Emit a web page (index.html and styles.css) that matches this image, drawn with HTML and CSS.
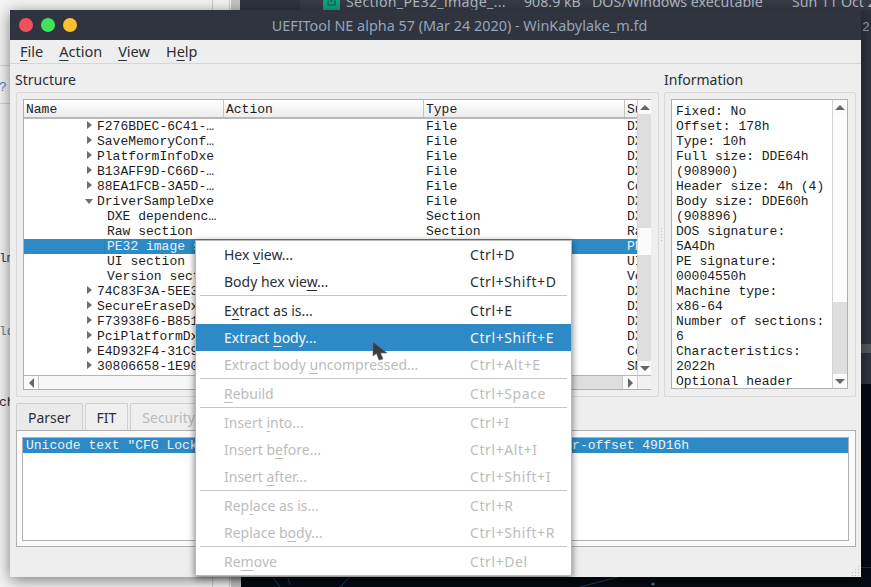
FILE: index.html
```html
<!DOCTYPE html>
<html lang="en">
<head>
  <meta charset="UTF-8">
  <meta name="viewport" content="width=device-width, initial-scale=1.0">
  <title>UEFITool NE alpha 57</title>
  <link rel="stylesheet" href="styles.css">
</head>
<body>
  <div class="desktop">
    <!-- things behind the window -->
    <div class="files-left">
      <span class="frag frag-a">?</span>
      <span class="frag frag-b">lm</span>
      <span class="frag frag-c">ld</span>
      <span class="frag frag-d">ch</span>
    </div>
    <div class="files-right">
      <div class="file-row">
        <svg class="file-icon" width="17" height="14" viewBox="0 0 17 14"><rect width="17" height="14" fill="#12a37f"/><rect x="5" y="1" width="7" height="8" fill="none" stroke="#0b5f4c"/><path d="M7.5 3.5 L10 5 L7.5 6.500Z" fill="#0b5f4c"/></svg>
        <span class="file-name">Section_PE32_image_...</span>
        <span class="file-size">908.9 kB</span>
        <span class="file-type">DOS/Windows executable</span>
        <span class="file-date">Sun 11 Oct 2020</span>
      </div>
    </div>
    <span class="frag frag-e">2</span>
    <div class="strip-band"></div>
    <svg class="wallpaper" width="631" height="20" viewBox="0 0 631 20">
      <path d="M25 0 L40 20 M45 0 L50 18 M100 20 L120 0 M400 4 L340 20 M400 4 L640 0" stroke="#1c4560" stroke-width="1" fill="none"/>
      <circle cx="413" cy="17" r="1.500" fill="#3d87a8"/>
    </svg>

    <div class="window">
      <div class="titlebar">
        <div class="lights">
          <span class="light red"></span>
          <span class="light green"></span>
          <span class="light yellow"></span>
        </div>
        <div class="title">UEFITool NE alpha 57 (Mar 24 2020) - WinKabylake_m.fd</div>
      </div>

      <div class="menubar">
        <span><u>F</u>ile</span>
        <span><u>A</u>ction</span>
        <span><u>V</u>iew</span>
        <span>H<u>e</u>lp</span>
      </div>

      <div class="content">
        <div class="panels">
          <section class="panel">
            <h2 class="panel-title structure-title">Structure</h2>
            <div class="group">
              <div class="tree">
                <div class="tree-main">
                  <div class="tree-head">
                    <div class="head-cell c-name">Name</div>
                    <div class="head-cell c-action">Action</div>
                    <div class="head-cell c-type">Type</div>
                    <div class="head-cell c-sub">Subtype</div>
                  </div>
                  <div class="row"><div class="c-name node"><i class="arrow-r"></i>F276BDEC-6C41-…</div><div class="c-action"></div><div class="c-type">File</div><div class="c-sub">DXE driver</div></div>
                  <div class="row"><div class="c-name node"><i class="arrow-r"></i>SaveMemoryConf…</div><div class="c-action"></div><div class="c-type">File</div><div class="c-sub">DXE driver</div></div>
                  <div class="row"><div class="c-name node"><i class="arrow-r"></i>PlatformInfoDxe</div><div class="c-action"></div><div class="c-type">File</div><div class="c-sub">DXE driver</div></div>
                  <div class="row"><div class="c-name node"><i class="arrow-r"></i>B13AFF9D-C66D-…</div><div class="c-action"></div><div class="c-type">File</div><div class="c-sub">DXE driver</div></div>
                  <div class="row"><div class="c-name node"><i class="arrow-r"></i>88EA1FCB-3A5D-…</div><div class="c-action"></div><div class="c-type">File</div><div class="c-sub">Combined</div></div>
                  <div class="row"><div class="c-name node"><i class="arrow-d"></i>DriverSampleDxe</div><div class="c-action"></div><div class="c-type">File</div><div class="c-sub">DXE driver</div></div>
                  <div class="row"><div class="c-name leaf">DXE dependenc…</div><div class="c-action"></div><div class="c-type">Section</div><div class="c-sub">DXE dep</div></div>
                  <div class="row"><div class="c-name leaf">Raw section</div><div class="c-action"></div><div class="c-type">Section</div><div class="c-sub">Raw</div></div>
                  <div class="row selected"><div class="c-name leaf"><span class="focus">PE32 image section</span></div><div class="c-action"></div><div class="c-type">Section</div><div class="c-sub">PE32</div></div>
                  <div class="row"><div class="c-name leaf">UI section</div><div class="c-action"></div><div class="c-type">Section</div><div class="c-sub">UI</div></div>
                  <div class="row"><div class="c-name leaf">Version section</div><div class="c-action"></div><div class="c-type">Section</div><div class="c-sub">Version</div></div>
                  <div class="row"><div class="c-name node"><i class="arrow-r"></i>74C83F3A-5EE3-…</div><div class="c-action"></div><div class="c-type">File</div><div class="c-sub">DXE driver</div></div>
                  <div class="row"><div class="c-name node"><i class="arrow-r"></i>SecureEraseDxe</div><div class="c-action"></div><div class="c-type">File</div><div class="c-sub">DXE driver</div></div>
                  <div class="row"><div class="c-name node"><i class="arrow-r"></i>F73938F6-B851-…</div><div class="c-action"></div><div class="c-type">File</div><div class="c-sub">DXE driver</div></div>
                  <div class="row"><div class="c-name node"><i class="arrow-r"></i>PciPlatformDxe</div><div class="c-action"></div><div class="c-type">File</div><div class="c-sub">DXE driver</div></div>
                  <div class="row"><div class="c-name node"><i class="arrow-r"></i>E4D932F4-31C9-…</div><div class="c-action"></div><div class="c-type">File</div><div class="c-sub">Combined</div></div>
                  <div class="row"><div class="c-name node"><i class="arrow-r"></i>30806658-1E90-…</div><div class="c-action"></div><div class="c-type">File</div><div class="c-sub">SMM driver</div></div>
                </div>
                <div class="vbar">
                  <div class="sb-btn"><i class="tri-up"></i></div>
                  <div class="vbar-track">
                    <div class="vbar-thumb"></div>
                  </div>
                  <div class="sb-btn"><i class="tri-down"></i></div>
                </div>
                <div class="hbar">
                  <div class="sb-btn"><i class="tri-left"></i></div>
                  <div class="hbar-track">
                    <div class="hbar-thumb"></div>
                  </div>
                  <div class="sb-btn"><i class="tri-right"></i></div>
                </div>
                <div class="corner"></div>
              </div>
            </div>
          </section>

          <section class="panel">
            <h2 class="panel-title">Information</h2>
            <div class="group">
              <div class="info">
                <div class="info-text">Fixed: No
Offset: 178h
Type: 10h
Full size: DDE64h
(908900)
Header size: 4h (4)
Body size: DDE60h
(908896)
DOS signature:
5A4Dh
PE signature:
00004550h
Machine type:
x86-64
Number of sections:
6
Characteristics:
2022h
Optional header</div>
                <div class="vbar">
                  <div class="sb-btn"><i class="tri-up"></i></div>
                  <div class="vbar-track info-track">
                    <div class="info-thumb"></div>
                  </div>
                  <div class="sb-btn"><i class="tri-down"></i></div>
                </div>
              </div>
            </div>
          </section>
        </div>

        <div class="tabs">
          <div class="tab tab-active">Parser</div>
          <div class="tab">FIT</div>
          <div class="tab tab-disabled">Security</div>
        </div>
        <div class="tab-pane">
          <div class="messages">
            <div class="message">Unicode text "CFG Lock" in DriverSampleDxe/PE32 image section at header-offset 49D16h</div>
          </div>
        </div>
      </div>

      <svg class="grip" width="11" height="11" viewBox="0 0 11 11" fill="#bdbdbd">
        <rect x="8" y="0" width="1" height="1"/><rect x="8" y="3" width="1" height="1"/><rect x="5" y="3" width="1" height="1"/><rect x="8" y="6" width="1" height="1"/><rect x="5" y="6" width="1" height="1"/><rect x="2" y="6" width="1" height="1"/><rect x="8" y="9" width="1" height="1"/><rect x="5" y="9" width="1" height="1"/><rect x="2" y="9" width="1" height="1"/>
      </svg>
      <div class="splitter"></div>
    </div>

    <div class="context-menu">
      <div class="item"><span class="label">Hex <u>v</u>iew...</span><span>Ctrl+D</span></div>
      <div class="item"><span class="label">Body hex vie<u>w</u>...</span><span>Ctrl+Shift+D</span></div>
      <div class="sep"></div>
      <div class="item"><span class="label">E<u>x</u>tract as is...</span><span>Ctrl+E</span></div>
      <div class="item active"><span class="label">Extract <u>b</u>ody...</span><span>Ctrl+Shift+E</span></div>
      <div class="item disabled"><span class="label">Extract body <u>u</u>ncompressed...</span><span>Ctrl+Alt+E</span></div>
      <div class="sep"></div>
      <div class="item disabled"><span class="label"><u>R</u>ebuild</span><span>Ctrl+Space</span></div>
      <div class="sep"></div>
      <div class="item disabled"><span class="label">Insert <u>i</u>nto...</span><span>Ctrl+I</span></div>
      <div class="item disabled"><span class="label">Insert b<u>e</u>fore...</span><span>Ctrl+Alt+I</span></div>
      <div class="item disabled"><span class="label">Insert <u>a</u>fter...</span><span>Ctrl+Shift+I</span></div>
      <div class="sep"></div>
      <div class="item disabled"><span class="label">Rep<u>l</u>ace as is...</span><span>Ctrl+R</span></div>
      <div class="item disabled"><span class="label">Replace b<u>o</u>dy...</span><span>Ctrl+Shift+R</span></div>
      <div class="sep"></div>
      <div class="item disabled"><span class="label">Re<u>m</u>ove</span><span>Ctrl+Del</span></div>
    </div>

    <svg class="cursor" width="18" height="21" viewBox="0 0 18 21">
      <path d="M1 1 L1 15 L4.500 12.500 L7 19 L11 18 L8.500 12 L15 12 Z" fill="#3c3c3e" stroke="#6a6a6a" stroke-width="0.600"/>
    </svg>
  </div>
</body>
</html>
```

FILE: styles.css
```css
* {
  box-sizing: border-box;
}

body {
  margin: 0;
  font-family: 'Noto Sans', sans-serif;
  font-size: 14px;
  color: #2b2f36;
}

.desktop {
  position: relative;
  width: 871px;
  height: 587px;
  overflow: hidden;
  background-color: #050b14;
}

/* background windows */
.files-left {
  position: absolute;
  left: 0;
  top: 0;
  width: 241px;
  height: 587px;
  background-color: #f4f4f4;
  background-image:
    linear-gradient(#d4d4d4, #d4d4d4),
    linear-gradient(#d4d4d4, #d4d4d4),
    linear-gradient(#cfcfcf, #cfcfcf),
    linear-gradient(#cfcfcf, #cfcfcf);
  background-repeat: no-repeat;
  background-size: 10px 1px, 10px 1px, 1px 100%, 1px 100%;
  background-position: 0 65px, 0 103px, 212px 0, 229px 0;
  border-right: 10px solid #c6c6c6;
}

.files-right {
  position: absolute;
  left: 240px;
  top: 0;
  width: 631px;
  height: 384px;
  background-color: #2f343f;
}

.file-row {
  position: relative;
  height: 10px;
  margin-left: 60px;
  overflow: hidden;
  background-color: #363b46;
  color: #b4bac4;
  font-size: 14.2px;
  line-height: 14px;
  white-space: nowrap;
}

.file-row span,
.file-icon {
  position: absolute;
  top: -5px;
}

.file-icon { left: 23px; top: -4px; }
.file-name { left: 46px; letter-spacing: 0.3px; }
.file-size { left: 224px; }
.file-type { left: 292px; }
.file-date { left: 492px; }

.frag {
  position: absolute;
  font-family: 'Liberation Mono', monospace;
  font-size: 13px;
  line-height: 15px;
}

.frag-a { left: -1px; top: 80px; color: #4b82b5; }
.frag-b { left: -1px; top: 251px; color: #27425c; }
.frag-c { left: -1px; top: 324px; color: #6e8193; }
.frag-d { left: -1px; top: 395px; color: #22303c; }
.frag-e { left: 862px; top: 20px; color: #9aa3ad; }

.strip-band {
  position: absolute;
  left: 861px;
  top: 344px;
  width: 10px;
  height: 9px;
  background-color: #555a61;
}

.wallpaper {
  position: absolute;
  left: 240px;
  top: 567px;
}

/* main window */
.window {
  position: absolute;
  left: 10px;
  top: 10px;
  width: 851px;
  height: 567px;
  background-color: #eeeeee;
  box-shadow: 0 3px 14px rgba(0, 0, 0, 0.5);
}

.titlebar {
  position: relative;
  display: flex;
  align-items: center;
  justify-content: center;
  height: 30px;
  background-color: #2f343f;
}

.lights {
  position: absolute;
  left: 9px;
  top: 8px;
  display: flex;
  gap: 8px;
}

.light {
  width: 14px;
  height: 14px;
  border-radius: 50%;
}

.red { background-color: #f0525b; }
.green { background-color: #3fe45c; }
.yellow { background-color: #fbc02f; }

.title {
  margin-left: 48px;
  color: #96a5bb;
  font-size: 14.4px;
}

.menubar {
  display: flex;
  gap: 16px;
  height: 24px;
  padding-left: 10px;
  border-bottom: 1px solid #d6d6d6;
  font-size: 14.5px;
  line-height: 23px;
}

u {
  text-decoration-thickness: 1px;
  text-decoration-skip-ink: none;
  text-underline-offset: 3px;
}

.content {
  padding: 0 5px 0 6px;
}

.panels {
  display: grid;
  grid-template-columns: 643px 192px;
  gap: 5px;
}

.panel-title {
  height: 28px;
  margin: 0;
  padding-top: 6px;
  font-size: 14px;
  font-weight: normal;
  line-height: 19px;
}

.structure-title {
  margin-left: -1px;
}

.group {
  height: 305px;
  padding: 6px 7px 7px 6px;
  border: 1px solid #d9d9d9;
  border-radius: 2px;
}

/* tree */
.tree {
  display: grid;
  grid-template-columns: 613px 14px;
  grid-template-rows: 275px 14px;
  height: 291px;
  border: 1px solid #b0b0b0;
  background-color: #fff;
  font-family: 'Liberation Mono', monospace;
  font-size: 13px;
  color: #1c1c1c;
}

.tree-main {
  overflow: hidden;
}

.tree-head {
  display: flex;
  height: 19px;
  border-bottom: 2px solid #b9b9b9;
  background: linear-gradient(#ffffff, #ececec);
  line-height: 19px;
}

.head-cell {
  padding-left: 2px;
  border-right: 1px solid #c4c4c4;
}

.row {
  display: flex;
  height: 15px;
  line-height: 15px;
  white-space: nowrap;
}

.c-name { width: 200px; }
.c-action { width: 200px; }
.c-type { width: 201px; padding-left: 2px; }
.c-sub { width: 12px; padding-left: 2px; overflow: hidden; }

.head-cell.c-sub { border-right: 0; }

.node,
.leaf {
  overflow: hidden;
}

.node { padding-left: 62px; }
.leaf { padding-left: 83px; }

.arrow-r,
.arrow-d {
  display: inline-block;
  width: 11px;
  vertical-align: 1px;
}

.arrow-r::before,
.arrow-d::before {
  content: "";
  display: block;
  width: 0;
  height: 0;
}

.arrow-r::before {
  margin-left: 1px;
  border-top: 4px solid transparent;
  border-bottom: 4px solid transparent;
  border-left: 5px solid #6b6e73;
}

.arrow-d::before {
  margin-left: -1px;
  border-left: 4px solid transparent;
  border-right: 4px solid transparent;
  border-top: 5px solid #6b6e73;
}

.selected {
  background-color: #2e8ac6;
  color: #e8f2f9;
}

.focus {
  margin-left: -2px;
  padding-left: 2px;
  outline: 1px solid #2a7fb8;
}

/* scrollbars */
.vbar {
  display: flex;
  flex-direction: column;
  grid-row: 1;
  grid-column: 2;
  border-left: 1px solid #d2d2d2;
}

.hbar {
  display: flex;
  grid-row: 2;
  grid-column: 1;
  border-top: 1px solid #b5b5b5;
}

.sb-btn {
  display: flex;
  align-items: center;
  justify-content: center;
  flex: 0 0 14px;
  background-color: #fafafa;
}

.vbar-track,
.hbar-track {
  flex: 1;
  background-color: #dedede;
}

.vbar-thumb {
  height: 27px;
  margin-top: 114px;
  background-color: #fbfbfb;
}

.hbar-track {
  border-left: 1px solid #c8c8c8;
  border-right: 1px solid #c8c8c8;
}

.hbar-thumb {
  width: 360px;
  height: 100%;
  background-color: #f7f7f7;
}

.corner {
  border-top: 1px solid #b5b5b5;
  border-left: 1px solid #d2d2d2;
  background-color: #f1f1f1;
}

.tri-up,
.tri-down {
  width: 0;
  height: 0;
  border-left: 5px solid transparent;
  border-right: 5px solid transparent;
}

.tri-up { border-bottom: 5px solid #666; }
.tri-down { border-top: 5px solid #666; }

.tri-left,
.tri-right {
  width: 0;
  height: 0;
  border-top: 5px solid transparent;
  border-bottom: 5px solid transparent;
}

.tri-left { border-right: 5px solid #666; }
.tri-right { border-left: 5px solid #666; }

/* information */
.info {
  display: flex;
  height: 290px;
  border: 1px solid #b0b0b0;
  background-color: #fff;
}

.info-text {
  flex: 1;
  padding: 4px 0 0 4px;
  overflow: hidden;
  font-family: 'Liberation Mono', monospace;
  font-size: 13px;
  line-height: 15px;
  white-space: pre;
  color: #1c1c1c;
}

.info .vbar {
  flex: 0 0 15px;
}

.info-track {
  display: flex;
  flex-direction: column;
}

.info-thumb {
  height: 188px;
  background-color: #fcfcfc;
}

/* bottom tabs */
.tabs {
  display: flex;
  gap: 2px;
  height: 27px;
  margin-top: 6px;
}

.tab {
  padding: 0 11px;
  border: 1px solid #cfcfcf;
  border-bottom: 0;
  border-radius: 2px 2px 0 0;
  background-color: #efefef;
  line-height: 28px;
}

.tab-active {
  background-color: #eaeaea;
}

.tab-disabled {
  width: 90px;
  color: #b9b9b9;
}

.tab-pane {
  height: 117px;
  padding: 6px 6px 5px 5px;
  border: 1px solid #b0b0b0;
  background-color: #fafafa;
}

.messages {
  height: 104px;
  border: 1px solid #b0b0b0;
  background-color: #fff;
  font-family: 'Liberation Mono', monospace;
  font-size: 13px;
  line-height: 15px;
}

.message {
  padding-left: 3px;
  background-color: #2e8ac6;
  color: #e8f2f9;
  white-space: nowrap;
}

.grip {
  position: absolute;
  right: 0;
  bottom: 0;
}

.splitter {
  position: absolute;
  left: 651px;
  top: 218px;
  width: 1px;
  height: 14px;
  background-image: linear-gradient(#bbb 50%, transparent 50%);
  background-size: 1px 3px;
}

/* popup menu */
.context-menu {
  position: absolute;
  left: 195px;
  top: 240px;
  width: 377px;
  border: 1px solid #b8b8b8;
  background-color: #fff;
  box-shadow: 0 2px 7px rgba(0, 0, 0, 0.55);
}

.item {
  display: flex;
  height: 27px;
  padding-left: 28px;
  line-height: 27px;
  color: #2b2f36;
}

.label {
  width: 246px;
  white-space: nowrap;
}

.label + span {
  letter-spacing: 0.6px;
}

.sep {
  height: 1px;
  margin: 0 4px 1px;
  background-color: #c6c6c6;
}

.item.active {
  background-color: #2e8ac6;
  color: #f2f7fb;
}

.item.disabled {
  color: #bcbcbc;
}

.cursor {
  position: absolute;
  left: 372px;
  top: 341px;
}
```
